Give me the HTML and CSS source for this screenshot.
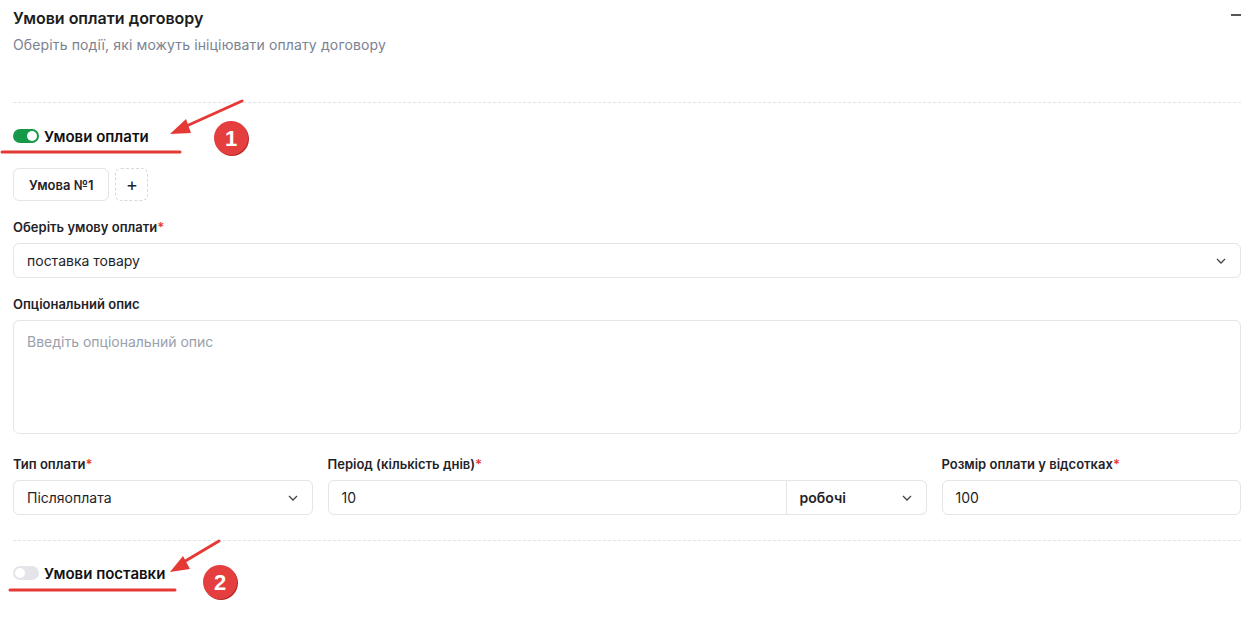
FILE: index.html
```html
<!DOCTYPE html>
<html lang="uk">
<head>
    <meta charset="UTF-8">
    <meta name="viewport" content="width=device-width, initial-scale=1.0">
    <title>Умови оплати договору</title>
    <link rel="stylesheet" href="styles.css">
</head>
<body>

    <div class="page">
        <div class="header">
            <div>
                <div class="title">Умови оплати договору</div>
                <div class="subtitle">Оберіть події, які можуть ініціювати оплату договору</div>
            </div>
            <span class="collapse"></span>
        </div>

        <div class="divider first"></div>

        <div class="toggle-row">
            <span class="toggle on"><span class="knob"></span></span>
            <span class="toggle-label">Умови оплати</span>
        </div>

        <div class="tabs">
            <button class="tab">Умова №1</button>
            <button class="tab add">+</button>
        </div>

        <div class="field">
            <label>Оберіть умову оплати<span class="req">*</span></label>
            <div class="input select">
                <span>поставка товару</span>
                <svg class="chev" width="10" height="6" viewBox="0 0 10 6"><path d="M1 1l4 4 4-4" fill="none" stroke="#444" stroke-width="1.3"/></svg>
            </div>
        </div>

        <div class="field">
            <label>Опціональний опис</label>
            <div class="input textarea"><span class="placeholder">Введіть опціональний опис</span></div>
        </div>

        <div class="row">
            <div class="col">
                <label>Тип оплати<span class="req">*</span></label>
                <div class="input select">
                    <span>Післяоплата</span>
                    <svg class="chev" width="10" height="6" viewBox="0 0 10 6"><path d="M1 1l4 4 4-4" fill="none" stroke="#444" stroke-width="1.3"/></svg>
                </div>
            </div>
            <div class="col">
                <label>Період (кількість днів)<span class="req">*</span></label>
                <div class="joined">
                    <div class="input left"><span>10</span></div>
                    <div class="input select right">
                        <span>робочі</span>
                        <svg class="chev" width="10" height="6" viewBox="0 0 10 6"><path d="M1 1l4 4 4-4" fill="none" stroke="#444" stroke-width="1.3"/></svg>
                    </div>
                </div>
            </div>
            <div class="col">
                <label>Розмір оплати у відсотках<span class="req">*</span></label>
                <div class="input"><span>100</span></div>
            </div>
        </div>

        <div class="divider second"></div>

        <div class="toggle-row second">
            <span class="toggle"><span class="knob"></span></span>
            <span class="toggle-label">Умови поставки</span>
        </div>
    </div>

    <!-- annotation marks drawn over the screenshot -->
    <svg class="marks" width="1256" height="620" viewBox="0 0 1256 620">
        <line x1="2" y1="152" x2="180" y2="152" stroke="#e53935" stroke-width="3" stroke-linecap="round"/>
        <line x1="242" y1="101" x2="182" y2="128" stroke="#e53935" stroke-width="3" stroke-linecap="round"/>
        <polygon points="170,134 186,119 191,133" fill="#e53935"/>
        <circle cx="232" cy="139" r="17" fill="#b42a2a"/>
        <circle cx="231" cy="138" r="17" fill="#e53e3e"/>
        <text x="231" y="146" text-anchor="middle" class="badge-num">1</text>

        <line x1="10" y1="590" x2="175" y2="590" stroke="#e53935" stroke-width="3" stroke-linecap="round"/>
        <line x1="219" y1="541" x2="182" y2="563" stroke="#e53935" stroke-width="3" stroke-linecap="round"/>
        <polygon points="170,572 183,556 190,569" fill="#e53935"/>
        <circle cx="221" cy="583" r="17" fill="#b42a2a"/>
        <circle cx="220" cy="582" r="17" fill="#e53e3e"/>
        <text x="220" y="590" text-anchor="middle" class="badge-num">2</text>
    </svg>

</body>
</html>
```

FILE: styles.css
```css
body {
    font-family: Inter, "Noto Sans", sans-serif;
    margin: 0;
    background-color: #fff;
    color: #1f2328;
}
.page {
    padding: 8px 15px 0 13px;
}
.header {
    display: flex;
    justify-content: space-between;
    align-items: flex-start;
}
.title {
    font-size: 16px;
    font-weight: 600;
    line-height: 20px;
    color: #1c1c1c;
}
.subtitle {
    font-size: 14px;
    line-height: 18px;
    letter-spacing: 0.13px;
    margin-top: 8px;
    color: #7b8291;
}
.collapse {
    display: block;
    width: 10px;
    height: 2px;
    background-color: #555;
    margin-top: 6px;
}
.divider {
    border-top: 1px dashed #e2e4e8;
}
.divider.first {
    margin-top: 48px;
}
.divider.second {
    margin-top: 25px;
}
.toggle-row {
    display: flex;
    align-items: center;
    gap: 5px;
    height: 20px;
    margin-top: 23px;
}
.toggle-row.second {
    margin-top: 22px;
}
.toggle {
    position: relative;
    width: 26px;
    height: 14px;
    border-radius: 7px;
    background-color: #e3e5e9;
}
.toggle .knob {
    position: absolute;
    top: 2px;
    left: 2px;
    width: 10px;
    height: 10px;
    border-radius: 50%;
    background-color: #fff;
}
.toggle.on {
    background-color: #17994a;
}
.toggle.on .knob {
    left: 14px;
}
.toggle-label {
    font-size: 15px;
    font-weight: 600;
    color: #111;
}
.tabs {
    display: flex;
    gap: 6px;
    margin-top: 22px;
}
.tab {
    font-family: inherit;
    height: 33px;
    padding: 0 15px;
    font-size: 13px;
    font-weight: 600;
    color: #1f2328;
    background-color: #fff;
    border: 1px solid #e3e5e9;
    border-radius: 6px;
}
.tab.add {
    width: 33px;
    padding: 0;
    font-size: 18px;
    font-weight: 400;
    border: 1px dashed #d6d9de;
}
.field {
    margin-top: 17px;
}
label {
    display: block;
    font-size: 13px;
    font-weight: 600;
    line-height: 18px;
    margin-bottom: 7px;
    color: #1f2328;
}
.req {
    color: #e53935;
}
.input {
    display: flex;
    align-items: center;
    justify-content: space-between;
    height: 35px;
    box-sizing: border-box;
    padding: 0 13px;
    border: 1px solid #e3e5e9;
    border-radius: 6px;
    font-size: 14px;
    color: #1f2328;
}
.select .chev {
    margin-right: 1px;
}
.textarea {
    height: 114px;
    align-items: flex-start;
    padding-top: 12px;
}
.placeholder {
    color: #9aa0ab;
}
.row {
    display: grid;
    grid-template-columns: 1fr 2fr 1fr;
    gap: 15px;
    margin-top: 21px;
}
.joined {
    display: flex;
}
.joined .left {
    flex: 1;
    border-radius: 6px 0 0 6px;
}
.joined .right {
    width: 140px;
    border-left: none;
    border-radius: 0 6px 6px 0;
    font-weight: 600;
}
.marks {
    position: absolute;
    top: 0;
    left: 0;
    pointer-events: none;
}
.badge-num {
    font-family: "Liberation Sans", Arial, sans-serif;
    font-size: 22px;
    font-weight: 700;
    fill: #fff;
}
```
